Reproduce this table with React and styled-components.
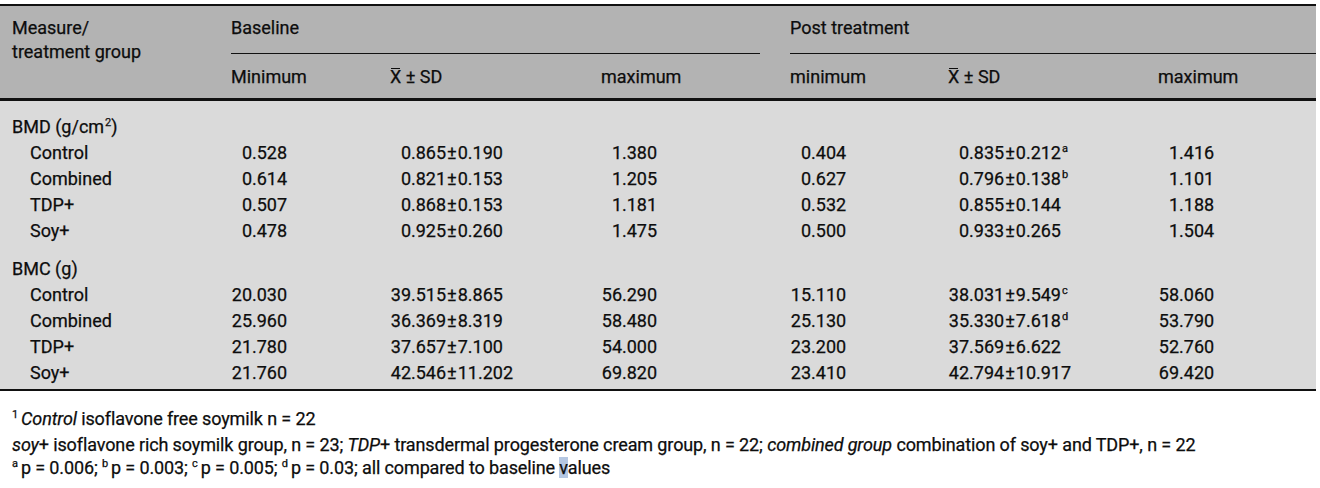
import styled, { createGlobalStyle } from 'styled-components';

const GlobalStyle = createGlobalStyle`
  html, body {
    margin: 0;
    padding: 0;
    background: #fff;
  }
  body {
    font-family: Roboto, "Open Sans", sans-serif;
    font-size: 18px;
    color: #0d0d0d;
    -webkit-text-stroke: 0.25px #0d0d0d;
  }
`;

/* ---- table ---- */
const Table = styled.table`
  margin-top: 4px;
  width: 1316px;
  table-layout: fixed;
  border-collapse: collapse;
  border-top: 2px solid #111;
  border-bottom: 2px solid #111;
  line-height: 24px;
`;

const Col = styled.col`
  width: ${({ $w }) => $w}px;
`;

const Head = styled.thead`
  background: #b3b3b3;
  border-bottom: 3px solid #111;
`;

const Th = styled.th`
  text-align: left;
  font-weight: 400;
  vertical-align: top;
  padding: ${({ $top }) => ($top ? '10px 0 0' : '11px 0 9px')};
  padding-left: ${({ $label }) => ($label ? '12px' : '0')};
`;

const Rule = styled.div`
  margin-top: 13px;
  margin-right: ${({ $gap }) => $gap || 0}px;
  border-top: 1px solid #111;
`;

const Bar = styled.span`
  position: relative;
  &::before {
    content: '';
    position: absolute;
    left: 1px;
    right: 1px;
    top: 2px;
    height: 1px;
    background: currentColor;
  }
`;

const Body = styled.tbody`
  background: #dadada;
`;

const Td = styled.td`
  padding: 0;
  padding-top: ${({ $pt }) => $pt || 0}px;
  padding-bottom: ${({ $pb }) => $pb || 0}px;
  padding-left: ${({ $indent }) => $indent || 0}px;
  line-height: 26px;
  white-space: nowrap;
`;

const IntPart = styled.span`
  display: inline-block;
  width: 21px;
  text-align: right;
`;

const Pm = styled.span`
  margin: 0 1px;
`;

const Sup = styled.sup`
  font-size: 11px;
  line-height: 0;
  vertical-align: 7px;
  margin-left: 1px;
`;

/* ---- footnotes ---- */
const Notes = styled.div`
  padding: 16px 0 0 12px;
  line-height: 23px;
  letter-spacing: -0.12px;
`;

const Note = styled.div`
  margin-bottom: ${({ $mb }) => $mb || 0}px;
`;

const NoteSup = styled.sup`
  font-size: 11px;
  line-height: 0;
  vertical-align: 7px;
  margin-right: 3px;
`;

const Mark = styled.span`
  background: rgba(90, 130, 190, 0.45);
`;

const groups = [
  {
    title: <>BMD (g/cm<Sup>2</Sup>)</>,
    rows: [
      ['Control', '0.528', ['0.865', '0.190'], '1.380', '0.404', ['0.835', '0.212', 'a'], '1.416'],
      ['Combined', '0.614', ['0.821', '0.153'], '1.205', '0.627', ['0.796', '0.138', 'b'], '1.101'],
      ['TDP+', '0.507', ['0.868', '0.153'], '1.181', '0.532', ['0.855', '0.144'], '1.188'],
      ['Soy+', '0.478', ['0.925', '0.260'], '1.475', '0.500', ['0.933', '0.265'], '1.504'],
    ],
  },
  {
    title: 'BMC (g)',
    rows: [
      ['Control', '20.030', ['39.515', '8.865'], '56.290', '15.110', ['38.031', '9.549', 'c'], '58.060'],
      ['Combined', '25.960', ['36.369', '8.319'], '58.480', '25.130', ['35.330', '7.618', 'd'], '53.790'],
      ['TDP+', '21.780', ['37.657', '7.100'], '54.000', '23.200', ['37.569', '6.622'], '52.760'],
      ['Soy+', '21.760', ['42.546', '11.202'], '69.820', '23.410', ['42.794', '10.917'], '69.420'],
    ],
  },
];

function Num({ value }) {
  const i = value.indexOf('.');
  return (
    <>
      <IntPart>{value.slice(0, i)}</IntPart>
      {value.slice(i)}
    </>
  );
}

function Cell({ value, pt, pb }) {
  if (Array.isArray(value)) {
    const [mean, sd, note] = value;
    return (
      <Td $pt={pt} $pb={pb}>
        <Num value={mean} />
        <Pm>±</Pm>
        {sd}
        {note && <Sup>{note}</Sup>}
      </Td>
    );
  }
  return (
    <Td $pt={pt} $pb={pb}>
      <Num value={value} />
    </Td>
  );
}

export default function App() {
  return (
    <>
      <GlobalStyle />
      <Table>
        <colgroup>
          <Col $w={231} />
          <Col $w={159} />
          <Col $w={211} />
          <Col $w={189} />
          <Col $w={158} />
          <Col $w={210} />
          <Col $w={158} />
        </colgroup>
        <Head>
          <tr>
            <Th $top $label rowSpan={2}>
              Measure/
              <br />
              treatment group
            </Th>
            <Th $top colSpan={3}>
              Baseline
              <Rule $gap={30} />
            </Th>
            <Th $top colSpan={3}>
              Post treatment
              <Rule />
            </Th>
          </tr>
          <tr>
            <Th>Minimum</Th>
            <Th><Bar>X</Bar> ± SD</Th>
            <Th>maximum</Th>
            <Th>minimum</Th>
            <Th><Bar>X</Bar> ± SD</Th>
            <Th>maximum</Th>
          </tr>
        </Head>
        <Body>
          {groups.map((g, gi) => {
            const pt = gi === 0 ? 13 : 12;
            return [
              <tr key={`h${gi}`}>
                <Td $indent={12} $pt={pt}>{g.title}</Td>
                {[0, 1, 2, 3, 4, 5].map((k) => (
                  <Td key={k} $pt={pt} />
                ))}
              </tr>,
              ...g.rows.map((r, ri) => {
                const pb = gi === groups.length - 1 && ri === g.rows.length - 1 ? 3 : 0;
                return (
                  <tr key={`${gi}-${ri}`}>
                    <Td $indent={30} $pb={pb}>{r[0]}</Td>
                    {r.slice(1).map((v, k) => (
                      <Cell key={k} value={v} pb={pb} />
                    ))}
                  </tr>
                );
              }),
            ];
          })}
        </Body>
      </Table>
      <Notes>
        <Note $mb={3}>
          <NoteSup>1</NoteSup>
          <i>Control</i> isoflavone free soymilk n = 22
        </Note>
        <Note>
          <i>soy</i>+ isoflavone rich soymilk group, n = 23; <i>TDP</i>+ transdermal progesterone
          cream group, n = 22; <i>combined group</i> combination of soy+ and TDP+, n = 22
        </Note>
        <Note>
          <NoteSup>a</NoteSup>p = 0.006; <NoteSup>b</NoteSup>p = 0.003; <NoteSup>c</NoteSup>p =
          0.005; <NoteSup>d</NoteSup>p = 0.03; all compared to baseline <Mark>v</Mark>alues
        </Note>
      </Notes>
    </>
  );
}
